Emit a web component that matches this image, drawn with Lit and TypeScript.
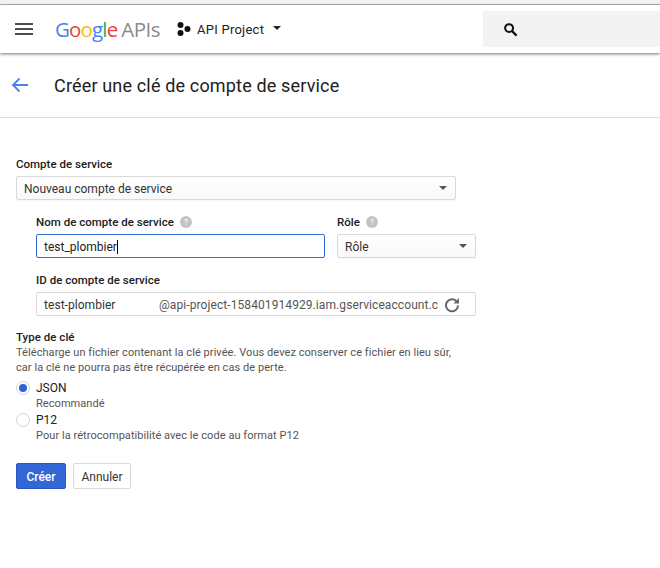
import { LitElement, html, css } from "lit";
import { customElement } from "lit/decorators.js";

const caret = html`<svg class="caret" width="8" height="4" viewBox="0 0 8 4"><path d="M0 0h8L4 4z" fill="#555"/></svg>`;
const help = html`<svg class="help" width="12" height="12" viewBox="0 0 12 12"><circle cx="6" cy="6" r="6" fill="#c4c4c4"/><path d="M4.200 4.600c0-1 .8-1.700 1.800-1.700s1.800.7 1.800 1.600c0 1.200-1.400 1.200-1.400 2.500H5.600c0-1.700 1.300-1.600 1.300-2.500 0-.5-.4-.8-.9-.8s-.9.3-.9.9zM5.600 7.800h.9v1H5.600z" fill="#fff"/></svg>`;

@customElement("app-root")
export class AppRoot extends LitElement {
  static styles = css`
    :host { display: block; width: 660px; height: 568px; background: #fff; overflow: hidden; font-family: Roboto, "Liberation Sans", sans-serif; font-size: 12px; color: #212121; }
    .strip { height: 4px; background: #f2f2f2; border-bottom: 1px solid #b8b8b8; }
    .header { height: 48px; display: flex; align-items: center; background: #fff; box-shadow: 0 1px 3px rgba(0,0,0,.55); position: relative; }
    .menu { margin-left: 15px; width: 18px; height: 12px; display: flex; flex-direction: column; justify-content: space-between; }
    .menu i { display: block; height: 2px; background: #4d4d4d; }
    .logo { margin-left: 22px; font-family: "Open Sans", sans-serif; font-size: 20.500px; letter-spacing: -.85px; white-space: nowrap; width: 110px; }
    .b { color: #4285f4; } .r { color: #ea4335; } .y { color: #fbbc05; } .g { color: #34a853; }
    .apis { color: #8a8a8a; margin-left: 4px; letter-spacing: -.5px; }
    .dots { margin-left: 12px; }
    .proj { margin-left: 6px; font-size: 13px; letter-spacing: .25px; color: #212121; }
    .pcaret { margin-left: 9px; margin-bottom: 3px; }
    .search { margin-left: auto; width: 177px; height: 36px; background: #f3f3f3; border-radius: 2px; display: flex; align-items: center; }
    .search svg { margin-left: 20px; margin-top: 1px; }
    .titlebar { height: 64px; display: flex; align-items: center; border-bottom: 1px solid #ddd; }
    .back { margin-left: 11px; }
    h1 { margin: 0 0 0 25px; font-weight: 400; font-size: 18px; letter-spacing: .16px; color: #212121; }
    .form { padding: 39px 0 0 16px; }
    .label { font-weight: 500; font-size: 11.500px; line-height: 14px; letter-spacing: .02px; color: #212121; display: flex; align-items: center; gap: 6px; }
    .field { box-sizing: border-box; height: 24px; border: 1px solid #d9d9d9; border-radius: 2px; display: flex; align-items: center; padding: 1px 7px 0; margin-top: 5px; font-size: 12px; color: #333; background: #fff; }
    .select { background: linear-gradient(#fff, #f9f9f9); box-shadow: 0 1px 1px rgba(0,0,0,.04); }
    .caret { margin-left: auto; margin-right: 1px; margin-top: -2px; }
    .w440 { width: 440px; }
    .sub { margin-left: 20px; width: 440px; }
    .cols { display: flex; gap: 12px; margin-top: 15px; }
    .nom { width: 289px; }
    .role { width: 139px; }
    .focus { border-color: #2f6fd6; color: #222; }
    .cursor { display: inline-block; width: 1px; height: 14px; background: #000; }
    .idlab { margin-top: 15px; }
    .idv { width: 115px; flex: none; letter-spacing: .05px; }
    .dom { color: #555; white-space: nowrap; overflow: hidden; width: 280px; flex: none; letter-spacing: .085px; }
    .refresh { margin-left: 5px; flex: none; }
    .type { margin-top: 14px; }
    .desc { font-size: 11px; line-height: 15px; color: #555; letter-spacing: .065px; margin-top: 1px; width: 460px; }
    .radio { display: grid; grid-template-columns: 20px 1fr; align-items: center; margin-top: 5px; }
    .r-t { font-size: 12px; line-height: 16px; color: #212121; }
    .r-s { grid-column: 2; font-size: 11px; line-height: 15px; color: #555; letter-spacing: .06px; }
    .dot { width: 14px; height: 14px; box-sizing: border-box; border-radius: 50%; border: 1px solid #d4d4d4; display: flex; align-items: center; justify-content: center; background: #fff; }
    .dot i { width: 8px; height: 8px; border-radius: 50%; background: #2f62d3; }
    .radio.p12 { margin-top: 1px; }
    .btns { display: flex; gap: 7px; margin-top: 20px; }
    .btn { box-sizing: border-box; height: 26px; display: flex; align-items: center; justify-content: center; border-radius: 2px; font-size: 12px; padding-top: 1px; }
    .pri { width: 50px; background: #3367d6; color: #fff; border: 1px solid #2a56c6; font-weight: 500; }
    .sec { width: 58px; background: #fff; color: #333; border: 1px solid #d9d9d9; }
  `;

  render() {
    return html`
      <div class="strip"></div>
      <div class="header">
        <div class="menu"><i></i><i></i><i></i></div>
        <div class="logo"><span class="b">G</span><span class="r">o</span><span class="y">o</span><span class="b">g</span><span class="g">l</span><span class="r">e</span><span class="apis">APIs</span></div>
        <svg class="dots" width="14" height="14" viewBox="0 0 14 14"><circle cx="3.500" cy="3" r="3" fill="#111"/><circle cx="3.500" cy="11" r="3" fill="#111"/><circle cx="10.500" cy="7" r="3" fill="#111"/></svg>
        <span class="proj">API Project</span>
        <svg class="pcaret" width="8" height="4" viewBox="0 0 8 4"><path d="M0 0h8L4 4z" fill="#222"/></svg>
        <div class="search"><svg width="15" height="15" viewBox="0 0 16 16"><circle cx="6.500" cy="6.500" r="4.200" fill="none" stroke="#111" stroke-width="2.200"/><path d="M9.700 9.700l4.800 4.800" stroke="#111" stroke-width="2.400"/></svg></div>
      </div>
      <div class="titlebar">
        <svg class="back" width="18" height="16" viewBox="0 0 18 16"><path d="M17 8H2M8.500 1.500L2 8l6.500 6.500" fill="none" stroke="#4a80e8" stroke-width="1.800"/></svg>
        <h1>Créer une clé de compte de service</h1>
      </div>
      <div class="form">
        <div class="label">Compte de service</div>
        <div class="field select w440">Nouveau compte de service${caret}</div>
        <div class="sub">
          <div class="cols">
            <div class="nom">
              <div class="label">Nom de compte de service ${help}</div>
              <div class="field focus">test_plombier<span class="cursor"></span></div>
            </div>
            <div class="role">
              <div class="label">Rôle ${help}</div>
              <div class="field select">Rôle${caret}</div>
            </div>
          </div>
          <div class="label idlab">ID de compte de service</div>
          <div class="field"><span class="idv">test-plombier</span><span class="dom">@api-project-158401914929.iam.gserviceaccount.c</span>
            <svg class="refresh" width="16" height="16" viewBox="0 0 16 16"><path d="M13 5A6 6 0 1 0 14 8.500" fill="none" stroke="#666" stroke-width="2"/><path d="M9.500 6.500H15V1z" fill="#666"/></svg>
          </div>
        </div>
        <div class="label type">Type de clé</div>
        <div class="desc">Télécharge un fichier contenant la clé privée. Vous devez conserver ce fichier en lieu sûr,<br />car la clé ne pourra pas être récupérée en cas de perte.</div>
        <div class="radio">
          <span class="dot"><i></i></span><span class="r-t">JSON</span>
          <span class="r-s">Recommandé</span>
        </div>
        <div class="radio p12">
          <span class="dot"></span><span class="r-t">P12</span>
          <span class="r-s">Pour la rétrocompatibilité avec le code au format P12</span>
        </div>
        <div class="btns">
          <div class="btn pri">Créer</div>
          <div class="btn sec">Annuler</div>
        </div>
      </div>
    `;
  }
}
